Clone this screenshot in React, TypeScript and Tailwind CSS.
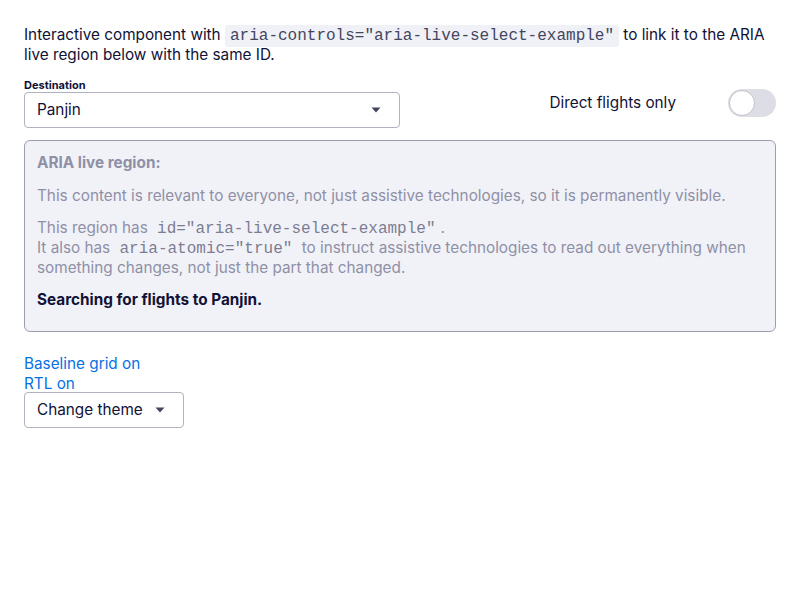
import React from "react";

function Caret({ className = "" }: { className?: string }) {
  return (
    <svg width="10" height="6" viewBox="0 0 10 6" className={className}>
      <path d="M0.5 0.5 L9.5 0.5 L5 5.5 Z" fill="#444560" />
    </svg>
  );
}

function Code({ children, bg = false }: { children: React.ReactNode; bg?: boolean }) {
  return (
    <code
      className={`px-[5px] text-[16px] leading-none ${bg ? "rounded-[3px] bg-[#eff1f6] py-[2px] text-[#444560]" : "text-[#7c7d93]"}`}
      style={{ fontFamily: '"Liberation Mono", monospace' }}
    >
      {children}
    </code>
  );
}

export default function App() {
  return (
    <div
      className="min-h-[600px] bg-white px-6 pt-[25px] text-[#111236]"
      style={{ fontFamily: 'Inter, "Noto Sans", sans-serif' }}
    >
      <p className="text-[15.3px] leading-[19.5px]">
        Interactive component with <Code bg>aria-controls="aria-live-select-example"</Code> to link it to the ARIA
        live region below with the same ID.
      </p>

      <div className="mt-[14px] flex items-start justify-between">
        <div className="w-[376px]">
          <div className="text-[11px] font-bold leading-[14px]">Destination</div>
          <div className="flex h-[36px] items-center justify-between rounded-[4px] border border-[#b2b2bf] px-3">
            <span className="text-[15.3px]">Panjin</span>
            <Caret className="mr-[6px]" />
          </div>
        </div>
        <div className="mt-[11px] flex items-center">
          <span className="mr-[52px] text-[15.3px]">Direct flights only</span>
          <div className="flex h-[28px] w-[48px] items-center rounded-full bg-[#dddde5] px-[1px]">
            <div className="h-[26px] w-[26px] rounded-full border border-[#c2c2cc] bg-white" />
          </div>
        </div>
      </div>

      <div className="mt-[12px] rounded-[6px] border border-[#9d9db0] bg-[#f1f2f8] px-3 pb-[21px] pt-[12px] text-[15.3px] leading-[20px] text-[#8f90a6]">
        <p className="font-bold">ARIA live region:</p>
        <p className="mt-[13px]">
          This content is relevant to everyone, not just assistive technologies, so it is permanently visible.
        </p>
        <p className="mt-[12px]">
          This region has <Code>id="aria-live-select-example"</Code>.
          <br />
          It also has <Code>aria-atomic="true"</Code> to instruct assistive technologies to read out everything when
          something changes, not just the part that changed.
        </p>
        <p className="mt-[12px] font-bold text-[#111236]">Searching for flights to Panjin.</p>
      </div>

      <div className="mt-[22px] text-[15.3px] leading-[20px] text-[#0770e3]">
        <div>Baseline grid on</div>
        <div>RTL on</div>
      </div>
      <div className="-mt-[2px] flex h-[36px] w-[160px] items-center justify-between rounded-[4px] border border-[#b2b2bf] pl-3 pr-[18px]">
        <span className="text-[15.3px]">Change theme</span>
        <Caret />
      </div>
    </div>
  );
}
